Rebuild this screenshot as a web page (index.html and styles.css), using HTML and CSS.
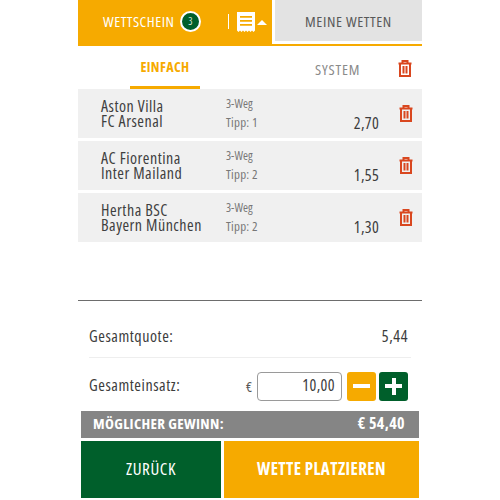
FILE: index.html
```html
<!DOCTYPE html>
<html lang="de">
<head>
<meta charset="utf-8">
<title>Wettschein</title>
<link rel="stylesheet" href="styles.css">
</head>
<body>
<svg class="defs" width="0" height="0" aria-hidden="true">
  <symbol id="trash" viewBox="0 0 14 17">
    <path d="M0.500 3.500h13M4.500 3V1h5V3M2 3.500V16h10V3.500M5.500 6v7.500M8.500 6v7.500" fill="none" stroke="currentColor" stroke-width="2"/>
  </symbol>
</svg>
<main class="app">
  <header class="topbar">
    <div class="tab-active">
      <span class="tab-label">WETTSCHEIN</span>
      <span class="badge">3</span>
      <span class="divider"></span>
      <svg class="receipt" width="18" height="20" viewBox="0 0 18 20"><path fill="#fff" fill-rule="evenodd" d="M0 0h18v18.500l-1.500 1.500-1.500-1.500-1.500 1.500-1.500-1.500-1.500 1.500L9 18.500l-1.500 1.500L6 18.500 4.500 20 3 18.500 1.500 20 0 18.500ZM3 4v1.700h12V4Zm0 4v1.700h12V8Zm0 4v1.700h12V12Z"/></svg>
      <span class="caret"></span>
    </div>
    <div class="tab-other">MEINE WETTEN</div>
  </header>

  <nav class="modes">
    <span class="mode mode-on">EINFACH</span>
    <span class="mode mode-off">SYSTEM</span>
    <svg class="trash trash-top"><use href="#trash"/></svg>
  </nav>

  <section class="bets">
    <article class="bet">
      <div class="teams">Aston Villa<br>FC Arsenal</div>
      <div class="market"><span>3-Weg</span><span>Tipp: 1</span></div>
      <div class="odd">2,70</div>
      <svg class="trash"><use href="#trash"/></svg>
    </article>
    <article class="bet">
      <div class="teams">AC Fiorentina<br>Inter Mailand</div>
      <div class="market"><span>3-Weg</span><span>Tipp: 2</span></div>
      <div class="odd">1,55</div>
      <svg class="trash"><use href="#trash"/></svg>
    </article>
    <article class="bet">
      <div class="teams">Hertha BSC<br>Bayern München</div>
      <div class="market"><span>3-Weg</span><span>Tipp: 2</span></div>
      <div class="odd">1,30</div>
      <svg class="trash"><use href="#trash"/></svg>
    </article>
  </section>

  <section class="summary">
    <div class="row-total"><span>Gesamtquote:</span><span>5,44</span></div>
    <div class="row-stake">
      <span class="stake-label">Gesamteinsatz:</span>
      <span class="euro">€</span>
      <input class="stake-input" type="text" value="10,00">
      <button class="step step-minus" aria-label="Weniger"><span class="bar-h"></span></button>
      <button class="step step-plus" aria-label="Mehr"><span class="bar-h"></span><span class="bar-v"></span></button>
    </div>
  </section>

  <div class="win"><span class="win-label">MÖGLICHER GEWINN:</span><span class="win-value">€ 54,40</span></div>
  <div class="actions">
    <button class="btn-back">ZURÜCK</button>
    <button class="btn-place">WETTE PLATZIEREN</button>
  </div>
</main>
</body>
</html>
```

FILE: styles.css
```css
* { box-sizing: border-box; }
html, body { margin: 0; padding: 0; background: #fff; }
body { font-family: "Open Sans", sans-serif; font-stretch: 75%; color: #3c3c3c; }
.defs { display: block; height: 0; }
.app { width: 344px; height: 500px; margin: 0 auto; }

.topbar { display: flex; height: 46px; border-bottom: 2px solid #f6aa00; }
.tab-active { width: 194px; height: 44px; background: #f6aa00; display: flex; align-items: center; padding-left: 25px; color: #fff; }
.tab-label { font-size: 15px; letter-spacing: 0.5px; width: 77px; white-space: nowrap; margin-top: -3px; }
.badge { width: 21px; height: 21px; border-radius: 50%; background: #005f2b; border: 2px solid #fff; color: #dfe9df; font-size: 10px; display: flex; align-items: center; justify-content: center; margin-top: -2px; }
.divider { width: 1px; height: 15px; background: #fff; margin-left: 27px; margin-top: -2px; }
.receipt { margin-left: 8px; margin-top: -1px; }
.caret { width: 0; height: 0; border-left: 5px solid transparent; border-right: 5px solid transparent; border-bottom: 5px solid #fff; margin-left: 2px; }
.tab-other { margin-left: 3px; width: 147px; height: 41px; padding-top: 0; background: #e3e3e3; display: flex; align-items: center; justify-content: center; color: #595959; font-size: 15px; letter-spacing: 0.6px; }

.modes { display: flex; align-items: center; height: 43px; }
.mode { height: 43px; display: flex; align-items: center; }
.mode-on { margin-left: 52px; width: 70px; justify-content: center; color: #f6aa00; font-weight: 700; font-size: 14px; letter-spacing: 0.4px; border-bottom: 3px solid #f6aa00; padding-top: 1px; }
.mode-off { margin-left: 115px; color: #8a8a8a; font-size: 15px; letter-spacing: 0.8px; width: 45px; white-space: nowrap; padding-top: 3px; }
.trash { width: 14px; height: 17px; color: #d9471f; display: block; flex: none; }
.trash-top { margin-left: 38px; margin-top: 1px; }

.bets { display: flex; flex-direction: column; gap: 3px; }
.bet { height: 49px; background: #f0f0f0; display: flex; }
.teams { width: 148px; padding: 10px 0 0 23px; font-size: 16px; letter-spacing: 0.5px; line-height: 15px; color: #3f3f3f; white-space: nowrap; }
.market { width: 80px; padding-top: 8px; display: flex; flex-direction: column; gap: 6px; font-size: 12px; line-height: 13px; color: #777; }
.market span + span { font-size: 13px; letter-spacing: 0.2px; }
.odd { width: 73px; padding-top: 25px; text-align: right; font-size: 16px; letter-spacing: 0.3px; line-height: 18px; }
.bet .trash { margin: 16px 0 0 20px; }

.summary { margin-top: 58px; border-top: 1px solid #6d6d6d; padding: 0 14px 0 11px; font-size: 16px; letter-spacing: 0.55px; }
.row-total { height: 57px; display: flex; justify-content: space-between; align-items: center; border-bottom: 1px solid #eee; margin-right: -3px; padding-right: 3px; padding-top: 14px; }
.row-stake { display: flex; align-items: center; height: 30px; margin-top: 13px; }
.stake-label { width: 157px; white-space: nowrap; margin-top: -2px; }
.euro { font-size: 14px; width: 11px; color: #555; }
.stake-input { width: 85px; height: 29px; border: 1px solid #9a9a9a; border-radius: 4px; background: #fff; font-family: inherit; font-stretch: inherit; font-size: 16px; letter-spacing: 0.4px; color: #3c3c3c; text-align: right; padding: 0 6px 2px; }
.step { width: 29px; height: 29px; border: 0; border-radius: 3px; padding: 0; position: relative; margin-left: 5px; }
.step + .step { margin-left: 3px; }
.step-minus { background: #f6aa00; }
.step-plus { background: #005f2b; }
.bar-h { position: absolute; left: 6px; right: 6px; top: 12.500px; height: 4px; background: #fff; }
.bar-v { position: absolute; top: 6px; bottom: 6px; left: 12.500px; width: 4px; background: #fff; }

.win { margin: 10px 3px 0; height: 27px; background: #858585; color: #fff; display: flex; justify-content: space-between; align-items: center; padding: 0 14px 3px 12px; font-weight: 700; }
.win-label { font-size: 15px; letter-spacing: 0.35px; }
.win-value { font-size: 16px; letter-spacing: 0.4px; }
.actions { margin: 3px 3px 0; display: flex; gap: 3px; height: 57px; }
.btn-back, .btn-place { border: 0; color: #fff; font-family: inherit; font-stretch: inherit; padding: 0 0 3px; font-size: 17px; }
.btn-back { width: 140px; background: #005f2b; letter-spacing: 0.6px; }
.btn-place { flex: 1; background: #f6aa00; font-weight: 700; letter-spacing: 0.4px; }
```
